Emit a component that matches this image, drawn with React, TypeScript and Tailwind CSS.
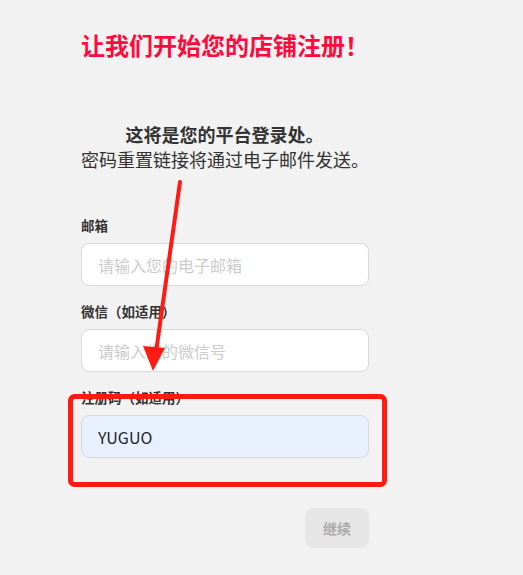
const font = { fontFamily: '"Noto Sans CJK SC", "Noto Sans", sans-serif' };

const Field = ({
  label,
  placeholder,
  value,
  filled,
}: {
  label: string;
  placeholder: string;
  value?: string;
  filled?: boolean;
}) => (
  <div className="flex flex-col">
    <label className="text-[13.5px] font-bold text-[#333] leading-[20px] h-[20px]">{label}</label>
    <input
      readOnly
      placeholder={placeholder}
      value={value ?? ''}
      className={`mt-[8px] h-[43px] w-[288px] rounded-[8px] border border-[#d9d9d9] px-[16px] text-[16px] text-[#222] placeholder:text-[#ccc] outline-none ${
        filled ? 'bg-[#e8f0fe]' : 'bg-white'
      }`}
      style={font}
    />
  </div>
);

export default function App() {
  return (
    <div className="relative min-h-[575px] w-full bg-[#f2f2f2]" style={font}>
      <div className="flex flex-col pl-[81px] pt-[31px]">
        <h1 className="text-[24px] font-bold leading-[28px] text-[#ff0a3c]">让我们开始您的店铺注册！</h1>

        {/* Intro */}
        <div className="mt-[63px] w-[278px] text-center text-[18px] leading-[25px] text-[#333]">
          <p className="pl-[9px] font-bold">这将是您的平台登录处。</p>
          <p className="whitespace-nowrap">密码重置链接将通过电子邮件发送。</p>
        </div>

        {/* Form */}
        <div className="mt-[43px] flex flex-col gap-[15px]">
          <Field label="邮箱" placeholder="请输入您的电子邮箱" />
          <Field label="微信（如适用）" placeholder="请输入您的微信号" />
          <Field label="注册码（如适用）" placeholder="" value="YUGUO" filled />
        </div>

        <div className="mt-[50px] flex w-[288px] justify-end">
          <button className="h-[40px] w-[64px] rounded-[8px] bg-[#e6e6e6] text-[14px] font-bold text-[#aaa]">
            继续
          </button>
        </div>
      </div>

      {/* annotation overlay */}
      <svg className="pointer-events-none absolute left-0 top-0" width="523" height="575">
        <line x1="180" y1="182" x2="156" y2="352" stroke="#ff1a14" strokeWidth="4" strokeLinecap="round" />
        <polygon points="143,346 165,348 153,371" fill="#ff1a14" />
        <rect x="70.5" y="396.5" width="314" height="88" rx="4" fill="none" stroke="#ff1a14" strokeWidth="5" />
      </svg>
    </div>
  );
}
